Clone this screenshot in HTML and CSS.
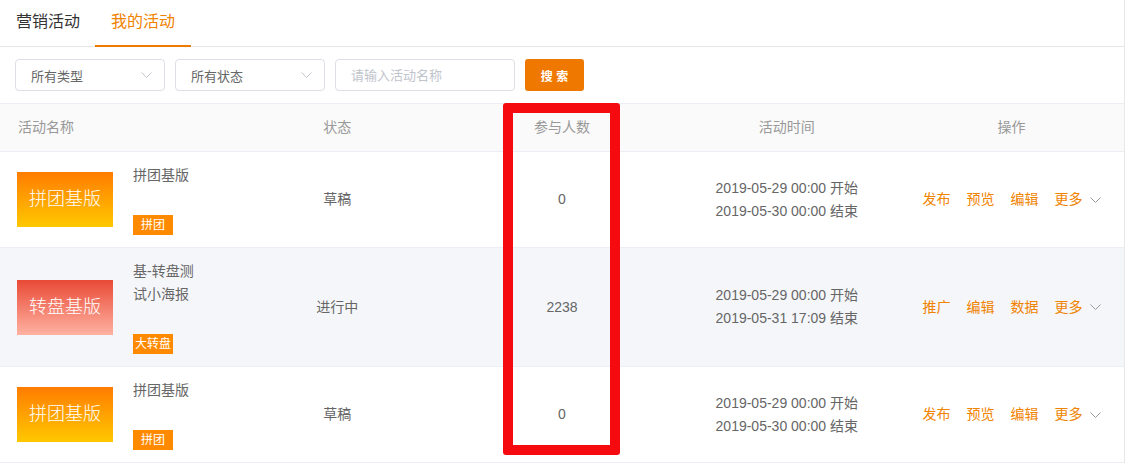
FILE: index.html
```html
<!DOCTYPE html>
<html lang="zh-CN">
<head>
<meta charset="utf-8">
<title>我的活动</title>
<link rel="stylesheet" href="styles.css">
</head>
<body>
<div class="page">
  <div class="tabs">
    <div class="tab first-tab">营销活动</div>
    <div class="tab active">我的活动</div>
  </div>

  <div class="filters">
    <div class="select"><span>所有类型</span><svg class="chev" width="11" height="6" viewBox="0 0 11 6"><path d="M0.5 0.5 L5.5 5.5 L10.5 0.5" fill="none" stroke="#c0c4cc" stroke-width="1"/></svg></div>
    <div class="select"><span>所有状态</span><svg class="chev" width="11" height="6" viewBox="0 0 11 6"><path d="M0.5 0.5 L5.5 5.5 L10.5 0.5" fill="none" stroke="#c0c4cc" stroke-width="1"/></svg></div>
    <input class="search" type="text" placeholder="请输入活动名称">
    <button class="btn">搜 索</button>
  </div>

  <div class="table">
    <div class="row head">
      <div class="cell first">活动名称</div>
      <div class="cell">状态</div>
      <div class="cell">参与人数</div>
      <div class="cell">活动时间</div>
      <div class="cell">操作</div>
    </div>

    <div class="row">
      <div class="cell first">
        <div class="thumb orange">拼团基版</div>
        <div class="info">
          <div class="name">拼团基版</div>
          <span class="tag">拼团</span>
        </div>
      </div>
      <div class="cell">草稿</div>
      <div class="cell">0</div>
      <div class="cell time"><div>2019-05-29 00:00 开始</div><div>2019-05-30 00:00 结束</div></div>
      <div class="cell ops">
        <a>发布</a><a>预览</a><a>编辑</a><a class="more">更多<svg width="11" height="6" viewBox="0 0 11 6"><path d="M0.5 0.5 L5.5 5.5 L10.5 0.5" fill="none" stroke="#999" stroke-width="1"/></svg></a>
      </div>
    </div>

    <div class="row hover">
      <div class="cell first">
        <div class="thumb red">转盘基版</div>
        <div class="info">
          <div class="name">基-转盘测试小海报</div>
          <span class="tag">大转盘</span>
        </div>
      </div>
      <div class="cell">进行中</div>
      <div class="cell">2238</div>
      <div class="cell time"><div>2019-05-29 00:00 开始</div><div>2019-05-31 17:09 结束</div></div>
      <div class="cell ops">
        <a>推广</a><a>编辑</a><a>数据</a><a class="more">更多<svg width="11" height="6" viewBox="0 0 11 6"><path d="M0.5 0.5 L5.5 5.5 L10.5 0.5" fill="none" stroke="#999" stroke-width="1"/></svg></a>
      </div>
    </div>

    <div class="row">
      <div class="cell first">
        <div class="thumb orange">拼团基版</div>
        <div class="info">
          <div class="name">拼团基版</div>
          <span class="tag">拼团</span>
        </div>
      </div>
      <div class="cell">草稿</div>
      <div class="cell">0</div>
      <div class="cell time"><div>2019-05-29 00:00 开始</div><div>2019-05-30 00:00 结束</div></div>
      <div class="cell ops">
        <a>发布</a><a>预览</a><a>编辑</a><a class="more">更多<svg width="11" height="6" viewBox="0 0 11 6"><path d="M0.5 0.5 L5.5 5.5 L10.5 0.5" fill="none" stroke="#999" stroke-width="1"/></svg></a>
      </div>
    </div>
  </div>

  <div class="highlight"></div>
</div>
</body>
</html>
```

FILE: styles.css
```css
* { box-sizing: border-box; }

html, body {
  margin: 0;
  padding: 0;
  background: #fff;
}

body {
  font-family: "Liberation Sans", "Noto Sans CJK SC", sans-serif;
  color: #666;
  font-size: 14px;
}

.page {
  position: relative;
  width: 1125px;
  height: 463px;
  border-right: 1px solid #e8e8e8;
  overflow: hidden;
}

/* tabs */
.tabs {
  display: flex;
  height: 47px;
  border-bottom: 1px solid #e6e6e6;
}

.tab {
  width: 96px;
  height: 47px;
  margin-bottom: -1px;
  text-align: center;
  font-size: 16px;
  line-height: 44px;
  color: #333;
  border-bottom: 2px solid transparent;
}

.tab.first-tab {
  width: 95px;
  text-align: left;
  padding-left: 16px;
}

.tab.active {
  color: #f08300;
  border-bottom-color: #ef7a00;
}

/* filters */
.filters {
  display: flex;
  gap: 10px;
  padding: 12px 15px;
}

.select {
  width: 150px;
  height: 32px;
  border: 1px solid #dcdfe6;
  border-radius: 4px;
  display: flex;
  align-items: center;
  justify-content: space-between;
  padding: 0 12px 0 15px;
  font-size: 13px;
  color: #666;
}

.chev { display: block; }

.search {
  width: 180px;
  height: 32px;
  border: 1px solid #dcdfe6;
  border-radius: 4px;
  padding: 0 15px;
  font-family: inherit;
  font-size: 13px;
  color: #666;
  outline: none;
}

.search::placeholder { color: #c0c4cc; }

.btn {
  width: 59px;
  height: 32px;
  border: none;
  border-radius: 3px;
  background: #ef7800;
  color: #fff;
  font-family: inherit;
  font-size: 12px;
  font-weight: bold;
  padding: 0;
  white-space: pre;
}

/* table */
.table {
  width: 1124px;
}

.row {
  display: grid;
  grid-template-columns: repeat(5, minmax(0, 1fr));
  border-bottom: 1px solid #ebeef5;
}

.row.head {
  height: 49px;
  background: #fafafa;
  border-top: 1px solid #ebeef5;
  color: #999;
}

.row.hover { background: #f5f6fa; }

.cell {
  display: flex;
  align-items: center;
  justify-content: center;
  text-align: center;
  line-height: 23px;
}

.cell.first {
  justify-content: flex-start;
  padding: 12px 0 12px 17px;
  text-align: left;
}

.head .cell.first { padding: 0 0 0 18px; }

.thumb {
  width: 96px;
  height: 55px;
  flex: none;
  display: flex;
  align-items: center;
  justify-content: center;
  color: #fff;
  font-size: 18px;
  font-weight: 300;
  margin-right: 20px;
}

.thumb.orange { background: linear-gradient(to bottom, #ff7c00, #ffc800); }
.thumb.red { background: linear-gradient(to bottom, #e94a36, #ffb2a2); }

.info {
  width: 70px;
  display: flex;
  flex-direction: column;
  align-items: flex-start;
}

.name {
  line-height: 23px;
  margin-bottom: 28px;
  color: #666;
}

.tag {
  display: block;
  width: 40px;
  height: 20px;
  line-height: 20px;
  text-align: center;
  background: #ff8a00;
  color: #fff;
  font-size: 12px;
}

.time {
  flex-direction: column;
}

.ops {
  gap: 16px;
}

.ops a {
  color: #f08300;
  display: flex;
  align-items: center;
}

.ops .more svg {
  margin-left: 7px;
}

/* annotation overlay */
.highlight {
  position: absolute;
  left: 503px;
  top: 103px;
  width: 117px;
  height: 352px;
  border: 10px solid #f50a10;
  border-radius: 3px;
  pointer-events: none;
}
```
